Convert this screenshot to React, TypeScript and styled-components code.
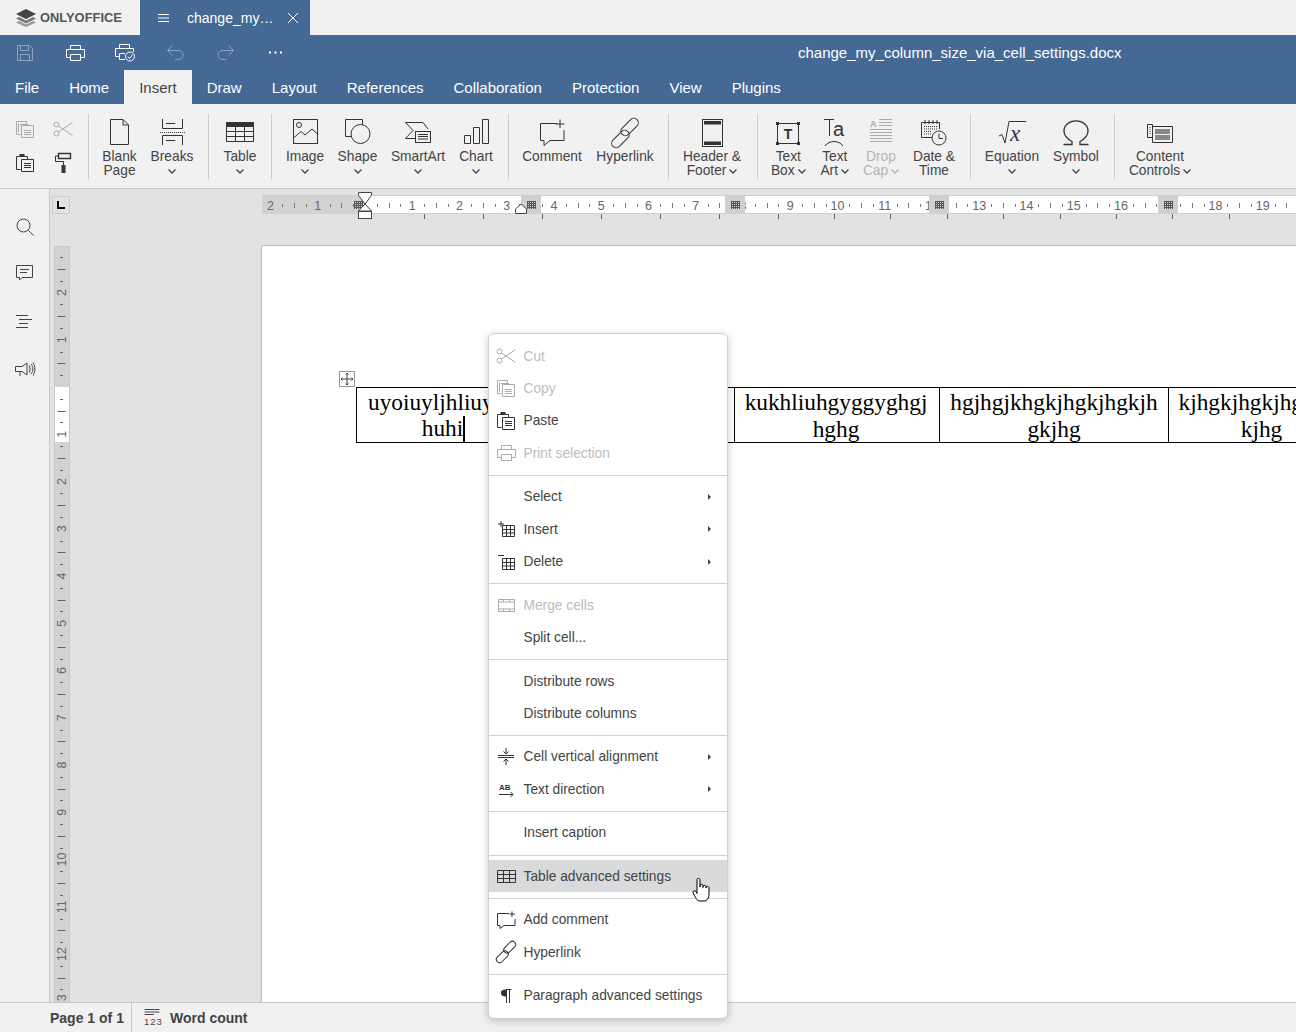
import { FC, ReactNode } from 'react';
import styled, { createGlobalStyle } from 'styled-components';

const GlobalStyle = createGlobalStyle`
  html, body { margin: 0; padding: 0; overflow: hidden; background: #f1f1f1; }
  body { font-family: "Liberation Sans", Arial, sans-serif; color: #444; }
`;

const Screen = styled.div`
  position: relative;
  width: 1296px;
  height: 1032px;
  display: flex;
  flex-direction: column;
  overflow: hidden;
`;

/* title bar */
const TitleBar = styled.div`
  height: 35px;
  display: flex;
  background: #f1f1f1;
`;
const Logo = styled.div`
  width: 140px;
  padding-left: 16px;
  box-sizing: border-box;
  display: flex;
  align-items: center;
  gap: 4px;
  color: #555;
  font-size: 12.9px;
  font-weight: bold;
`;
const DocTab = styled.div`
  width: 170px;
  padding-left: 18px;
  box-sizing: border-box;
  display: flex;
  align-items: center;
  background: #446995;
  color: #fff;
  font-size: 14px;
`;
const DocTabName = styled.span`
  margin-left: 18px;
  width: 101px;
`;

const Header = styled.div`
  background: #446995;
  color: #fff;
`;
const QuickRow = styled.div`
  height: 35px;
  display: flex;
  align-items: center;
`;
const QuickBtn = styled.div<{ $off?: boolean }>`
  width: 50px;
  height: 35px;
  display: flex;
  align-items: center;
  justify-content: center;
  opacity: ${(p) => (p.$off ? 0.4 : 1)};
`;
const DocTitle = styled.div`
  margin-left: 498px;
  font-size: 15px;
  white-space: nowrap;
`;
const TabRow = styled.div`
  height: 34px;
  display: flex;
`;
const Tab = styled.div<{ $active?: boolean }>`
  padding: 1px 15px 0;
  display: flex;
  align-items: center;
  font-size: 15px;
  background: ${(p) => (p.$active ? '#f1f1f1' : 'transparent')};
  color: ${(p) => (p.$active ? '#444' : '#fff')};
`;

/* toolbar */
const Toolbar = styled.div`
  height: 85px;
  box-sizing: border-box;
  padding-top: 10px;
  display: flex;
  align-items: flex-start;
  background: #f1f1f1;
  border-bottom: 1px solid #cbcbcb;
`;
const Group = styled.div<{ $w: number; $pl?: number; $last?: boolean }>`
  width: ${(p) => p.$w}px;
  height: 65px;
  padding-left: ${(p) => p.$pl ?? 0}px;
  display: flex;
  border-right: ${(p) => (p.$last ? 'none' : '1px solid #cbcbcb')};
`;
const SmallGrid = styled.div`
  margin-left: 6px;
  display: grid;
  grid-template-columns: 38px 38px;
  grid-template-rows: 30px 34px;
  row-gap: 2px;
  align-items: center;
  justify-items: center;
  color: #333;
`;
const ToolBtn = styled.div<{ $w: number; $off?: boolean }>`
  flex: none;
  width: ${(p) => p.$w}px;
  display: flex;
  flex-direction: column;
  align-items: center;
  color: ${(p) => (p.$off ? '#b4b4b4' : '#444')};
  font-size: 13.75px;
  line-height: 14px;
  white-space: nowrap;
`;
const ToolIcon = styled.div`
  height: 31px;
  padding-top: 5px;
  display: flex;
  align-items: flex-start;
  justify-content: center;
  color: #333;
`;
const IconNudge = styled.div<{ $top: number }>`
  margin-top: ${(p) => p.$top}px;
`;
const LabelLine = styled.div`
  height: 14px;
  display: flex;
  align-items: center;
  gap: 3px;
`;

/* work area */
const Main = styled.div`
  flex: 1;
  min-height: 0;
  display: flex;
`;
const SideBar = styled.div`
  width: 49px;
  flex: none;
  padding-top: 26px;
  background: #f1f1f1;
  border-right: 1px solid #c8c8c8;
  display: flex;
  flex-direction: column;
  align-items: center;
  gap: 24px;
  color: #444;
`;
const SideBtn = styled.div`
  height: 24px;
  display: flex;
  align-items: center;
  justify-content: center;
  &:first-child {
    margin-bottom: -2px;
  }
`;
const Workspace = styled.div`
  flex: 1;
  min-width: 0;
  display: flex;
  flex-direction: column;
  background: #e2e2e2;
`;
const RulerRow = styled.div`
  height: 56px;
  flex: none;
  display: flex;
  align-items: flex-start;
`;
const CornerBtn = styled.div`
  margin: 7px 0 0 2px;
  width: 18px;
  height: 18px;
  box-sizing: border-box;
  border: 1px solid #ccc;
  display: flex;
  align-items: center;
  justify-content: center;
`;
const TopRulerWrap = styled.div`
  margin: 2px 0 0 192px;
`;
const DocRow = styled.div`
  flex: 1;
  min-height: 0;
  display: flex;
  align-items: stretch;
`;
const SideRulerWrap = styled.div`
  margin: 1px 0 0 4px;
  width: 16px;
  overflow: hidden;
`;
const Page = styled.div`
  margin-left: 191px;
  flex: 1;
  min-width: 0;
  background: #fff;
  border-left: 1px solid #bdbdbd;
  border-top: 1px solid #bdbdbd;
  padding: 141px 0 0 94px;
  overflow: hidden;
`;
const TableWrap = styled.div`
  position: relative;
  width: 1000px;
`;
const MoveHandle = styled.div`
  position: absolute;
  left: -17px;
  top: -16px;
  width: 16px;
  height: 16px;
  box-sizing: border-box;
  border: 1px solid #999;
  background: #fff;
  display: flex;
  align-items: center;
  justify-content: center;
  color: #444;
`;
const DocTable = styled.table`
  table-layout: fixed;
  border-collapse: collapse;
  width: 1000px;
  font-family: "Liberation Serif", "Times New Roman", serif;
  font-size: 23.33px;
  line-height: 26.1px;
  color: #000;
`;
const Cell = styled.td`
  border: 1px solid #000;
  padding: 1px 0 0;
  text-align: center;
  white-space: nowrap;
  overflow: hidden;
  &:nth-child(odd) {
    padding-right: 2px;
  }
`;
const Caret = styled.span`
  display: inline-block;
  width: 2px;
  height: 26px;
  margin: -6px -2px 0 0;
  background: #000;
  vertical-align: -6px;
`;

/* status bar */
const StatusBar = styled.div`
  height: 30px;
  flex: none;
  display: flex;
  align-items: center;
  box-sizing: border-box;
  background: #f1f1f1;
  border-top: 1px solid #c8c8c8;
  font-size: 14px;
  font-weight: bold;
  color: #444;
`;
const PageInfo = styled.div`
  width: 132px;
  height: 100%;
  box-sizing: border-box;
  padding-left: 50px;
  display: flex;
  align-items: center;
  border-right: 1px solid #c8c8c8;
`;
const WordCount = styled.div`
  margin-left: 12px;
  display: flex;
  align-items: center;
  gap: 10px;
`;

/* context menu */
const Menu = styled.div`
  position: absolute;
  left: 488px;
  top: 333px;
  width: 240px;
  box-sizing: border-box;
  padding: 5.9px 0 6px;
  background: #fff;
  border: 1px solid #d0d0d0;
  border-radius: 6px;
  box-shadow: 0 2px 8px rgba(0, 0, 0, 0.22);
  font-size: 13.75px;
`;
const Item = styled.div<{ $off?: boolean; $active?: boolean }>`
  height: 32.45px;
  display: flex;
  align-items: center;
  color: ${(p) => (p.$off ? '#bcbcbc' : '#444')};
  background: ${(p) => (p.$active ? '#d8dadc' : 'transparent')};
`;
const ItemIcon = styled.span`
  width: 34.5px;
  flex: none;
  display: flex;
  justify-content: center;
  color: #333;
`;
const Dim = styled.span`
  color: #aaa;
`;
const SubArrow = styled.span`
  margin: 0 16px 0 auto;
  width: 0;
  height: 0;
  border-left: 3px solid #444;
  border-top: 3px solid transparent;
  border-bottom: 3px solid transparent;
`;
const Sep = styled.div`
  height: 1px;
  margin: 5.5px 0 4.5px;
  background: #d0d0d0;
`;
const HandCursor = styled.div`
  position: absolute;
  left: 203px;
  top: 543px;
`;

const Glyph = styled.svg`
  display: block;
  flex: none;
  fill: none;
  stroke: currentColor;
  stroke-width: 1;
  overflow: visible;
`;
const Ico: FC<{ w: number; h: number; children: ReactNode }> = ({ w, h, children }) => (
  <Glyph width={w} height={h} viewBox={`0 0 ${w} ${h}`}>
    {children}
  </Glyph>
);

const Chevron = () => (
  <Ico w={8} h={5}>
    <path d="M.5.5L4 4L7.5.5" strokeWidth="1.3" />
  </Ico>
);

/* small icons, used by toolbar and menu */
const CopyIcon = () => (
  <Ico w={18} h={17}>
    <path d="M4.5 13.5H.5V.5H10.5V3.5" />
    <path d="M2.5 11.5V2.5M4 3.5H12" />
    <path d="M5.5 4.5H17.5V16.5H5.5Z" />
    <path d="M8 9.5H15M8 11.5H15M8 13.5H15" />
  </Ico>
);
const PasteIcon = () => (
  <Ico w={18} h={18}>
    <path d="M4.5 15.5H.5V2.5H11.5V5" />
    <path d="M3.5 1.5H8.5" strokeWidth="3" />
    <path d="M5.5 5.5H17.5V17.5H5.5Z" />
    <path d="M8 9.5H15M8 11.5H15M8 13.5H15" />
  </Ico>
);
const CutIcon = () => (
  <Ico w={20} h={16}>
    <circle cx="3.5" cy="3.5" r="2.5" />
    <circle cx="3.5" cy="12.5" r="2.5" />
    <path d="M5.5 5L19.5 14.5M5.5 11L19.5 1.5" />
  </Ico>
);
const PrintIcon = () => (
  <Ico w={19} h={16}>
    <path d="M4.5 4.5V.5H14.5V4.5" />
    <path d="M4.5 12.5H.5V4.5H18.5V12.5H14.5" />
    <path d="M4.5 9.5H14.5V15.5H4.5Z" />
  </Ico>
);
const CommentIcon = () => (
  <Ico w={19} h={18}>
    <path d="M12 2.5H.5V14.5H3V17.5L7 14.5H18V8" />
    <path d="M15 .5V6M12.5 3H18" />
  </Ico>
);
const LinkIcon = () => (
  <Ico w={20} h={20}>
    <g transform="rotate(-45 10 10)">
      <rect x="-3" y="7.5" width="14" height="6.5" rx="3.2" />
      <rect x="9" y="6" width="14" height="6.5" rx="3.2" />
    </g>
  </Ico>
);
const TableGridIcon = () => (
  <Ico w={19} h={13}>
    <path d="M.5.5H18.5V12.5H.5ZM.5 4.5H18.5M.5 8.5H18.5M6.5.5V12.5M12.5.5V12.5" />
  </Ico>
);
const RowsIcon: FC<{ minus?: boolean }> = ({ minus }) => (
  <Ico w={17} h={16}>
    {minus ? <path d="M0 1.5H6" /> : <path d="M0 3H6M3 0V6" />}
    <path d="M4.5 4.5H16.5V15.5H4.5ZM4.5 8.5H16.5M4.5 12H16.5M8.5 4.5V15.5M12.5 4.5V15.5" />
  </Ico>
);

const TopRuler = () => {
  const zero = 103;
  const cm = 47.25;
  const parts: ReactNode[] = [];
  for (let n = -2; n < 21; n++) {
    const x = zero + n * cm;
    if (n !== 0) {
      parts.push(
        <text key={`t${n}`} x={x} y={18.5} fontSize="12.5" textAnchor="middle" fill="#666" stroke="none">
          {Math.abs(n)}
        </text>
      );
    }
    [0.25, 0.5, 0.75].forEach((f) => {
      const tx = Math.round(x + cm * f) + 0.5;
      const half = f === 0.5 ? 2.5 : 1.5;
      parts.push(<path key={`k${n}${f}`} d={`M${tx} ${14.5 - half}V${14.5 + half}`} stroke="#777" />);
    });
  }
  const blocks = [259, 463, 667, 896];
  const stops = [162, 221, 280, 339, 398, 457, 516, 572, 628, 685, 741, 798, 854, 910, 967];
  return (
    <svg width="1034" height="34" viewBox="0 0 1034 34" style={{ display: 'block' }}>
      <rect x="0" y="5" width="1034" height="17" fill="#fff" />
      <rect x="0" y="5" width="103" height="17" fill="#d2d2d2" />
      <path d="M0 4.5H1034M0 22.5H1034" stroke="#d0d0d0" />
      {parts}
      {[86, ...blocks].map((x) => (
        <g key={x}>
          {x !== 86 && <rect x={x} y="5" width="20" height="17" fill="#d0d0d0" />}
          <path
            d={`M${x + 6.5} 10V18M${x + 8.5} 10V18M${x + 10.5} 10V18M${x + 12.5} 10V18M${x + 14.5} 10V18M${x + 6} 10.5H${x + 15}M${x + 6} 12.5H${x + 15}M${x + 6} 14.5H${x + 15}M${x + 6} 16.5H${x + 15}`}
            stroke="#555"
          />
        </g>
      ))}
      {stops.map((x) => (
        <path key={x} d={`M${x}.5 23V28`} stroke="#666" />
      ))}
      <path d="M96.5 1.5H109.5V4.5L103 13L96.5 4.5Z" fill="#fff" stroke="#444" />
      <path d="M103 13L109.5 20H96.5Z" fill="#fff" stroke="#444" />
      <rect x="96.5" y="20.5" width="13" height="7" fill="#fff" stroke="#444" />
      <path d="M253.5 22.5V18L259 13L264.5 18V22.5Z" fill="#fff" stroke="#444" />
    </svg>
  );
};

const SideRuler = () => {
  const zero = 141;
  const cm = 47.25;
  const parts: ReactNode[] = [];
  for (let n = -3; n < 14; n++) {
    const y = zero + n * cm;
    if (n !== 0 && n > -3) {
      parts.push(
        <text
          key={`t${n}`}
          transform={`translate(12 ${y}) rotate(-90)`}
          fontSize="12.5"
          textAnchor="middle"
          fill="#666"
          stroke="none"
        >
          {Math.abs(n)}
        </text>
      );
    }
    [0.25, 0.5, 0.75].forEach((f) => {
      const ty = Math.round(y + cm * f) + 0.5;
      const half = f === 0.5 ? 4 : 1.5;
      parts.push(<path key={`k${n}${f}`} d={`M${7.5 - half} ${ty}H${7.5 + half}`} stroke="#666" />);
    });
  }
  return (
    <svg width="16" height="756" viewBox="0 0 16 756" style={{ display: 'block' }}>
      <rect x="0" y="0" width="16" height="756" fill="#d2d2d2" />
      <rect x="1" y="141" width="14" height="55" fill="#fff" />
      <path d="M.5 0V756M15.5 0V756M0 .5H16" stroke="#c8c8c8" />
      {parts}
    </svg>
  );
};

type Tool = { w: number; lines: string[]; arrow?: boolean; off?: boolean; icon: ReactNode };

const ToolButton: FC<Tool> = ({ w, lines, arrow, off, icon }) => (
  <ToolBtn $w={w} $off={off}>
    <ToolIcon>{icon}</ToolIcon>
    <LabelLine>{lines[0]}</LabelLine>
    <LabelLine>
      {lines[1]}
      {arrow && <Chevron />}
    </LabelLine>
  </ToolBtn>
);

const grp2: Tool[] = [
  {
    w: 53,
    lines: ['Blank', 'Page'],
    icon: (
      <Ico w={19} h={26}>
        <path d="M.5.5H13L18.5 6V25.5H.5ZM13 .5V6H18.5" />
      </Ico>
    ),
  },
  {
    w: 52,
    lines: ['Breaks'],
    arrow: true,
    icon: (
      <Ico w={25} h={26}>
        <path d="M2.5 0V9.5H22.5V0M6 4.5H15M6 21.5H15M2.5 26V16.5H22.5V26" />
        <path d="M0 13.5H25" strokeDasharray="1 1" />
      </Ico>
    ),
  },
];
const tableTool: Tool = {
  w: 62,
  lines: ['Table'],
  arrow: true,
  icon: (
    <IconNudge $top={3}>
      <Ico w={28} h={20}>
        <path d="M.5.5H27.5V19.5H.5Z" />
        <rect x="0" y="0" width="28" height="5" fill="#333" stroke="none" />
        <path d="M.5 9.5H27.5M.5 14.5H27.5M9.5 4V20M18.5 4V20" />
      </Ico>
    </IconNudge>
  ),
};
const grp4: Tool[] = [
  {
    w: 52,
    lines: ['Image'],
    arrow: true,
    icon: (
      <Ico w={25} h={25}>
        <rect x=".5" y=".5" width="24" height="24" />
        <circle cx="6" cy="6" r="2.5" />
        <path d="M.5 19L8 12.5L12 16L19 10L24.5 15" />
      </Ico>
    ),
  },
  {
    w: 53,
    lines: ['Shape'],
    arrow: true,
    icon: (
      <Ico w={26} h={25}>
        <path d="M6 17.5H.5V.5H17.5V5.5" />
        <circle cx="15.5" cy="15" r="9.5" />
      </Ico>
    ),
  },
  {
    w: 68,
    lines: ['SmartArt'],
    arrow: true,
    icon: (
      <IconNudge $top={3}>
        <Ico w={26} h={22}>
          <path d="M13 16.5H.5L8 8.5L.5 .5H18L23 7" />
          <rect x="10.5" y="9.5" width="15" height="11" fill="#f1f1f1" />
          <path d="M13 12.5H23M13 14.5H23M13 17H23" />
        </Ico>
      </IconNudge>
    ),
  },
  {
    w: 48,
    lines: ['Chart'],
    arrow: true,
    icon: (
      <Ico w={25} h={25}>
        <path d="M.5 16.5H6.5V24.5H.5ZM9.5 8.5H15.5V24.5H9.5ZM18.5.5H24.5V24.5H18.5Z" />
      </Ico>
    ),
  },
];
const grp5: Tool[] = [
  {
    w: 73,
    lines: ['Comment'],
    icon: (
      <Ico w={25} h={27}>
        <path d="M17 4.5H.5V21.5H4V26.5L10 21.5H24V11" />
        <path d="M20 .5V9M15.5 5H24.5" />
      </Ico>
    ),
  },
  {
    w: 73,
    lines: ['Hyperlink'],
    icon: (
      <Ico w={28} h={28}>
        <g transform="rotate(-45 14 14)">
          <rect x="-4" y="10.5" width="21" height="9" rx="4.5" />
          <rect x="11" y="8.5" width="21" height="9" rx="4.5" />
        </g>
      </Ico>
    ),
  },
];
const headerTool: Tool = {
  w: 86,
  lines: ['Header &', 'Footer'],
  arrow: true,
  icon: (
    <Ico w={21} h={28}>
      <rect x=".5" y=".5" width="20" height="27" />
      <rect x="2" y="2" width="17" height="3.5" fill="#333" stroke="none" />
      <rect x="2" y="22.5" width="17" height="3.5" fill="#333" stroke="none" />
    </Ico>
  ),
};
const grp7: Tool[] = [
  {
    w: 46.5,
    lines: ['Text', 'Box'],
    arrow: true,
    icon: (
      <IconNudge $top={3}>
        <Ico w={24} h={23}>
          <rect x="1.5" y="1.5" width="21" height="20" />
          <path d="M0 0H3V3H0ZM21 0H24V3H21ZM0 20H3V23H0ZM21 20H24V23H21Z" fill="#333" stroke="none" />
          <text x="12" y="17" fontSize="14" fontWeight="bold" textAnchor="middle" fill="#333" stroke="none">T</text>
        </Ico>
      </IconNudge>
    ),
  },
  {
    w: 46.5,
    lines: ['Text', 'Art'],
    arrow: true,
    icon: (
      <Ico w={21} h={28}>
        <path d="M0 .5H10M5.5 .5V17" />
        <text x="9" y="17" fontSize="20" fill="#333" stroke="none">a</text>
        <path d="M1 27C5 21 15 21 19 27" />
      </Ico>
    ),
  },
  {
    w: 46,
    lines: ['Drop', 'Cap'],
    arrow: true,
    off: true,
    icon: (
      <Dim>
        <Ico w={22} h={24}>
          <text x="0" y="8" fontSize="9" fontWeight="bold" fill="#aaa" stroke="none">A</text>
          <path d="M9 .5H22M9 3.5H22M9 6.5H22M0 10.5H22M0 13.5H22M0 16.5H22M0 19.5H22M0 22.5H22" />
        </Ico>
      </Dim>
    ),
  },
  {
    w: 60,
    lines: ['Date &', 'Time'],
    icon: (
      <IconNudge $top={1}>
        <Ico w={26} h={26}>
          <path d="M12 17.5H.5V2.5H18.5V9" />
          <path d="M4 0V4M8 0V4M12 0V4M16 0V4" />
          <path d="M3 6.5H16M3 9H16M3 11.5H11M3 14H10" strokeDasharray="1 1" />
          <circle cx="18" cy="18" r="7" fill="#f1f1f1" />
          <path d="M18 13.5V18.5H22" />
        </Ico>
      </IconNudge>
    ),
  },
];
const grp8: Tool[] = [
  {
    w: 64,
    lines: ['Equation'],
    arrow: true,
    icon: (
      <IconNudge $top={2}>
        <Ico w={27} h={23}>
          <path d="M0 15L3 13.5L6 22L10 .5H27" />
          <text
            x="11"
            y="20"
            fontSize="23"
            fontStyle="italic"
            fontFamily="Liberation Serif, serif"
            fill="#333"
            stroke="none"
          >
            x
          </text>
        </Ico>
      </IconNudge>
    ),
  },
  {
    w: 64,
    lines: ['Symbol'],
    arrow: true,
    icon: (
      <IconNudge $top={1}>
        <Ico w={26} h={25}>
          <path
            d="M.5 24.5H9V21.5C3.5 18.5 1 15.5 1 11 1 5 6 .8 13 .8S25 5 25 11C25 15.5 22.5 18.5 17 21.5V24.5H25.5"
            strokeWidth="1.3"
          />
        </Ico>
      </IconNudge>
    ),
  },
];
const contentTool: Tool = {
  w: 90,
  lines: ['Content', 'Controls'],
  arrow: true,
  icon: (
    <IconNudge $top={5}>
      <Ico w={26} h={19}>
        <path d="M5.5 2.5H25.5V18.5H5.5Z" />
        <path d="M.5 .5H5.5V13.5H.5Z" />
        <rect x="8" y="5" width="15" height="5" fill="#888" stroke="none" />
        <rect x="8" y="11" width="15" height="5" fill="#888" stroke="none" />
        <path d="M3 3V11" strokeDasharray="1 1" />
      </Ico>
    </IconNudge>
  ),
};

const tabs = ['File', 'Home', 'Insert', 'Draw', 'Layout', 'References', 'Collaboration', 'Protection', 'View', 'Plugins'];

type Row = { text: string; off?: boolean; active?: boolean; sub?: boolean; icon?: ReactNode };
const menuGroups: Row[][] = [
  [
    { text: 'Cut', off: true, icon: <Dim><CutIcon /></Dim> },
    { text: 'Copy', off: true, icon: <Dim><CopyIcon /></Dim> },
    { text: 'Paste', icon: <PasteIcon /> },
    { text: 'Print selection', off: true, icon: <Dim><PrintIcon /></Dim> },
  ],
  [
    { text: 'Select', sub: true },
    { text: 'Insert', sub: true, icon: <RowsIcon /> },
    { text: 'Delete', sub: true, icon: <RowsIcon minus /> },
  ],
  [
    {
      text: 'Merge cells',
      off: true,
      icon: (
        <Dim>
          <Ico w={17} h={13}>
            <path d="M.5.5H16.5V12.5H.5ZM.5 3H16.5M.5 10H16.5M5.5 10V12.5M11.5 10V12.5M5.5 .5V3M11.5 .5V3" />
          </Ico>
        </Dim>
      ),
    },
    { text: 'Split cell...' },
  ],
  [{ text: 'Distribute rows' }, { text: 'Distribute columns' }],
  [
    {
      text: 'Cell vertical alignment',
      sub: true,
      icon: (
        <Ico w={16} h={17}>
          <path d="M0 7.5H16M0 9.5H16M8 0V6M5.5 3.5L8 6L10.5 3.5M8 17V11M5.5 13.5L8 11L10.5 13.5" />
        </Ico>
      ),
    },
    {
      text: 'Text direction',
      sub: true,
      icon: (
        <Ico w={15} h={13}>
          <text x="0" y="7" fontSize="8" fontWeight="bold" fill="#333" stroke="none">AB</text>
          <path d="M0 11.5H14M11.5 9L14 11.5L11.5 14" />
        </Ico>
      ),
    },
  ],
  [{ text: 'Insert caption' }],
  [{ text: 'Table advanced settings', active: true, icon: <TableGridIcon /> }],
  [
    { text: 'Add comment', icon: <CommentIcon /> },
    { text: 'Hyperlink', icon: <LinkIcon /> },
  ],
  [
    {
      text: 'Paragraph advanced settings',
      icon: (
        <Ico w={11} h={14}>
          <path d="M5 .5H10.5M5.5 .5V14M8.5 .5V14" />
          <path d="M5.5 .5C1 .5 0 2 0 4S1 7.5 5.5 7.5Z" fill="#333" stroke="none" />
        </Ico>
      ),
    },
  ],
];

export default function App() {
  return (
    <Screen>
      <GlobalStyle />
      <TitleBar>
        <Logo>
          <Ico w={20} h={18}>
            <path d="M10 0L20 5L10 10L0 5Z" fill="#444" stroke="none" />
            <path d="M3 8L0 9.5L10 14.5L20 9.5L17 8L10 11.5Z" fill="#777" stroke="none" />
            <path d="M3 12L0 13.5L10 18L20 13.5L17 12L10 15.5Z" fill="#999" stroke="none" />
          </Ico>
          ONLYOFFICE
        </Logo>
        <DocTab>
          <Ico w={11} h={8}>
            <path d="M0 .5H11M0 4H11M0 7.5H11" />
          </Ico>
          <DocTabName>change_my…</DocTabName>
          <Ico w={10} h={10}>
            <path d="M0 0L10 10M10 0L0 10" />
          </Ico>
        </DocTab>
      </TitleBar>

      <Header>
        <QuickRow>
          <QuickBtn $off>
            <Ico w={16} h={16}>
              <path d="M.5.5H12.5L15.5 3.5V15.5H.5ZM3.5 .5V5.5H11.5V.5M3.5 15.5V9.5H12.5V15.5" />
            </Ico>
          </QuickBtn>
          <QuickBtn>
            <PrintIcon />
          </QuickBtn>
          <QuickBtn>
            <Ico w={20} h={17}>
              <path d="M4.5 4.5V.5H14.5V4.5M4.5 12.5H.5V4.5H18.5V8M4.5 9.5H10M4.5 9.5V15.5H10" />
              <circle cx="15" cy="12.5" r="4.5" />
              <path d="M12.8 12.5L14.5 14.5L17.5 10.8" />
            </Ico>
          </QuickBtn>
          <QuickBtn $off>
            <Ico w={17} h={15}>
              <path d="M5.5 .5L.5 5.5L5.5 10.5M.5 5.5H11C14 5.5 16 7.5 16 10S14 14.5 11 14.5H8" />
            </Ico>
          </QuickBtn>
          <QuickBtn $off>
            <Ico w={17} h={15}>
              <path d="M11.5 .5L16.5 5.5L11.5 10.5M16.5 5.5H6C3 5.5 1 7.5 1 10S3 14.5 6 14.5H9" />
            </Ico>
          </QuickBtn>
          <QuickBtn>
            <Ico w={13} h={3}>
              <path d="M0 1.5H2M5.5 1.5H7.5M11 1.5H13" strokeWidth="2" />
            </Ico>
          </QuickBtn>
          <DocTitle>change_my_column_size_via_cell_settings.docx</DocTitle>
        </QuickRow>
        <TabRow>
          {tabs.map((t) => (
            <Tab key={t} $active={t === 'Insert'}>
              {t}
            </Tab>
          ))}
        </TabRow>
      </Header>

      <Toolbar>
        <Group $w={88}>
          <SmallGrid>
            <Dim><CopyIcon /></Dim>
            <Dim><CutIcon /></Dim>
            <PasteIcon />
            <Ico w={16} h={20}>
              <path d="M3.5 .5H15.5V5.5H3.5Z" strokeWidth="1.4" />
              <path d="M3.5 3H.5V8.5H8.5V12" />
              <rect x="6.5" y="12" width="4" height="8" fill="#333" stroke="none" />
            </Ico>
          </SmallGrid>
        </Group>
        <Group $w={115} $pl={4}>
          {grp2.map((t) => <ToolButton key={t.lines[0]} {...t} />)}
        </Group>
        <Group $w={62}>
          <ToolButton {...tableTool} />
        </Group>
        <Group $w={229} $pl={7}>
          {grp4.map((t) => <ToolButton key={t.lines[0]} {...t} />)}
        </Group>
        <Group $w={152.5} $pl={6.5}>
          {grp5.map((t) => <ToolButton key={t.lines[0]} {...t} />)}
        </Group>
        <Group $w={88}>
          <ToolButton {...headerTool} />
        </Group>
        <Group $w={205} $pl={7}>
          {grp7.map((t) => <ToolButton key={t.lines[0]} {...t} />)}
        </Group>
        <Group $w={134} $pl={9}>
          {grp8.map((t) => <ToolButton key={t.lines[0]} {...t} />)}
        </Group>
        <Group $w={90} $last>
          <ToolButton {...contentTool} />
        </Group>
      </Toolbar>

      <Main>
        <SideBar>
          <SideBtn>
            <Ico w={18} h={18}>
              <circle cx="7.5" cy="7.5" r="6.5" />
              <path d="M12.5 12.5L17.5 17.5" />
            </Ico>
          </SideBtn>
          <SideBtn>
            <Ico w={17} h={16}>
              <path d="M.5 .5H16.5V12.5H6L3.5 15V12.5H.5Z" />
              <path d="M4 4.5H13M4 7.5H11" />
            </Ico>
          </SideBtn>
          <SideBtn>
            <Ico w={17} h={13}>
              <path d="M0 .5H12M3 4.5H16M3 8.5H12M0 12.5H12" />
            </Ico>
          </SideBtn>
          <SideBtn>
            <Ico w={20} h={15}>
              <path d="M.5 4.5H7L12 1V13L7 9.5H.5ZM5 9.5V14" />
              <path d="M14 3.5C15.5 5.5 15.5 8.5 14 10.5M16 2C18.5 5 18.5 9 16 12M18 .5C20.5 4.5 20.5 9.5 18 13.5" />
            </Ico>
          </SideBtn>
        </SideBar>
        <Workspace>
          <RulerRow>
            <CornerBtn>
              <Ico w={8} h={8}>
                <path d="M1 0V7H8" strokeWidth="2" stroke="#000" />
              </Ico>
            </CornerBtn>
            <TopRulerWrap>
              <TopRuler />
            </TopRulerWrap>
          </RulerRow>
          <DocRow>
            <SideRulerWrap>
              <SideRuler />
            </SideRulerWrap>
            <Page>
              <TableWrap>
                <MoveHandle>
                  <Ico w={12} h={12}>
                    <path d="M6 0V12M0 6H12M4.5 1.5L6 0L7.5 1.5M4.5 10.5L6 12L7.5 10.5M1.5 4.5L0 6L1.5 7.5M10.5 4.5L12 6L10.5 7.5" />
                  </Ico>
                </MoveHandle>
                <DocTable>
                  <colgroup>
                    <col style={{ width: 174 }} />
                    <col style={{ width: 204 }} />
                    <col style={{ width: 205 }} />
                    <col style={{ width: 229 }} />
                    <col style={{ width: 188 }} />
                  </colgroup>
                  <tbody>
                    <tr>
                      <Cell>
                        uyoiuyljhliuyhg<br />huhi<Caret />
                      </Cell>
                      <Cell>
                        jhgkjhgk<br />kjh
                      </Cell>
                      <Cell>
                        kukhliuhgyggyghgj<br />hghg
                      </Cell>
                      <Cell>
                        hgjhgjkhgkjhgkjhgkjh<br />gkjhg
                      </Cell>
                      <Cell>
                        kjhgkjhgkjhgkjhg<br />kjhg
                      </Cell>
                    </tr>
                  </tbody>
                </DocTable>
              </TableWrap>
            </Page>
          </DocRow>
        </Workspace>
      </Main>

      <StatusBar>
        <PageInfo>Page 1 of 1</PageInfo>
        <WordCount>
          <Ico w={16} h={17}>
            <path d="M.5 .5H15.5M.5 3H15.5M.5 5.5H10" />
            <text x="0" y="16" fontSize="9.5" fontWeight="normal" fill="#444" stroke="none" letterSpacing="1">123</text>
          </Ico>
          Word count
        </WordCount>
      </StatusBar>

      <Menu>
        {menuGroups.map((rows, i) => (
          <div key={i}>
            {i > 0 && <Sep />}
            {rows.map((r) => (
              <Item key={r.text} $off={r.off} $active={r.active}>
                <ItemIcon>{r.icon}</ItemIcon>
                {r.text}
                {r.sub && <SubArrow />}
              </Item>
            ))}
          </div>
        ))}
        <HandCursor>
          <svg width="18" height="25" viewBox="0 0 18 25" style={{ display: 'block' }}>
            <path
              d="M5 13V2.500C5 1 8 1 8 2.500V10V8.500C8 7 11 7 11 8.500V10.500V9.500C11 8 14 8 14 9.500V11V10.500C14 9 17 9 17 10.500V17C17 21 15 24 12 24H8C5 24 4 21 2 18L1 15.500C.5 14 3 13 4 14.500L5 16.500Z"
              fill="#fff"
              stroke="#000"
            />
          </svg>
        </HandCursor>
      </Menu>
    </Screen>
  );
}
